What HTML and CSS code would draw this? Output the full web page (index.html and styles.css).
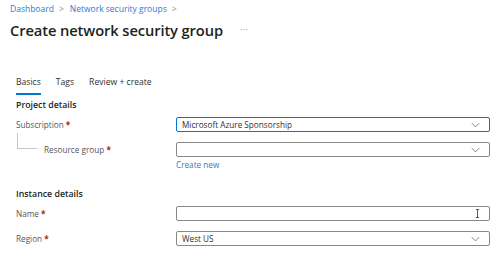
FILE: index.html
```html
<!DOCTYPE html>
<html lang="en">
<head>
  <meta charset="UTF-8" />
  <title>Create network security group</title>
  <link rel="stylesheet" href="styles.css">
</head>
<body>

<nav class="crumbs">
  <a href="#">Dashboard</a><span class="sep">&gt;</span><a href="#">Network security groups</a><span class="sep">&gt;</span>
</nav>

<div class="title-row">
  <h1>Create network security group</h1>
  <span class="more">&middot;&middot;&middot;</span>
</div>

<div class="tabs">
  <span class="tab active">Basics</span>
  <span class="tab">Tags</span>
  <span class="tab">Review + create</span>
</div>

<section class="group">
  <h2>Project details</h2>

  <div class="row">
    <label>Subscription <span class="req">*</span></label>
    <div class="control">
      <div class="select focus">
        <span>Microsoft Azure Sponsorship</span>
        <svg class="chev" viewBox="0 0 12 8"><path d="M1 1.5 6 6.5 11 1.5" /></svg>
      </div>
    </div>
  </div>

  <div class="row child">
    <div class="tree"></div>
    <label>Resource group <span class="req">*</span></label>
    <div class="control">
      <div class="select">
        <span></span>
        <svg class="chev" viewBox="0 0 12 8"><path d="M1 1.5 6 6.5 11 1.5" /></svg>
      </div>
      <a class="link" href="#">Create new</a>
    </div>
  </div>
</section>

<section class="group instance">
  <h2>Instance details</h2>

  <div class="row">
    <label>Name <span class="req">*</span></label>
    <div class="control">
      <div class="select text">
        <span></span>
        <!-- mouse cursor over the field -->
        <svg class="ibeam" viewBox="0 0 6 11"><path d="M1 .5h4M3 .5v10M1 10.5h4" /></svg>
      </div>
    </div>
  </div>

  <div class="row">
    <label>Region <span class="req">*</span></label>
    <div class="control">
      <div class="select">
        <span>West US</span>
        <svg class="chev" viewBox="0 0 12 8"><path d="M1 1.5 6 6.5 11 1.5" /></svg>
      </div>
    </div>
  </div>
</section>

</body>
</html>
```

FILE: styles.css
```css
* { box-sizing: border-box; }

body {
  margin: 0;
  padding: 0 10px 0 10px;
  font-family: "Open Sans", "Noto Sans", sans-serif;
  font-size: 8.2px;
  color: #323130;
  background: #ffffff;
}

a {
  color: #2b7cd3;
  text-decoration: none;
}

.crumbs {
  height: 16px;
  padding-top: 1px;
  font-size: 8.5px;
  line-height: 14px;
  display: flex;
  align-items: center;
}

.crumbs .sep {
  color: #8a8886;
  margin: 0 6px 0 5px;
}

.title-row {
  display: flex;
  align-items: center;
  height: 27px;
}

h1 {
  margin: 0;
  font-size: 14.7px;
  font-weight: 600;
  color: #201f1e;
  letter-spacing: -0.1px;
}

.more {
  margin-left: 17px;
  color: #8a8886;
  font-size: 9px;
  letter-spacing: 0.5px;
}

.tabs {
  display: flex;
  gap: 15px;
  margin-top: 33px;
  padding-left: 6px;
}

.tab {
  font-size: 8.6px;
  line-height: 13px;
  padding-bottom: 4px;
  color: #323130;
  border-bottom: 2px solid transparent;
}

.tab.active {
  border-bottom-color: #0078d4;
}

.group {
  padding-left: 6px;
}

h2 {
  margin: 4px 0 0 0;
  font-size: 8.8px;
  font-weight: 600;
  line-height: 13px;
  color: #201f1e;
}

.row {
  display: flex;
  align-items: flex-start;
  margin-top: 5px;
  position: relative;
}

.row + .row {
  margin-top: 10px;
}

.row label {
  width: 160px;
  line-height: 15px;
  color: #57565a;
}

.req {
  color: #a4262c;
  font-weight: 700;
}

.row.child label {
  padding-left: 28px;
}

.tree {
  position: absolute;
  left: 1px;
  top: -9px;
  width: 20px;
  height: 16px;
  border-left: 1px solid #c8c6c4;
  border-bottom: 1px solid #c8c6c4;
}

.control {
  flex: 1;
}

.select {
  height: 15px;
  border: 1px solid #8a8886;
  border-radius: 2px;
  display: flex;
  align-items: center;
  justify-content: space-between;
  padding: 0 9px 0 5px;
  color: #323130;
  position: relative;
}

.select.focus {
  border-color: #0078d4;
}

.chev {
  width: 9px;
  height: 6px;
}

.chev path {
  fill: none;
  stroke: #605e5c;
  stroke-width: 1;
}

.ibeam {
  position: absolute;
  right: 9px;
  top: 2px;
  width: 5px;
  height: 9px;
}

.ibeam path {
  fill: none;
  stroke: #333333;
  stroke-width: 1;
}

.link {
  display: block;
  line-height: 12px;
  margin-top: 2px;
}

.instance h2 {
  margin-top: 17px;
}
```
